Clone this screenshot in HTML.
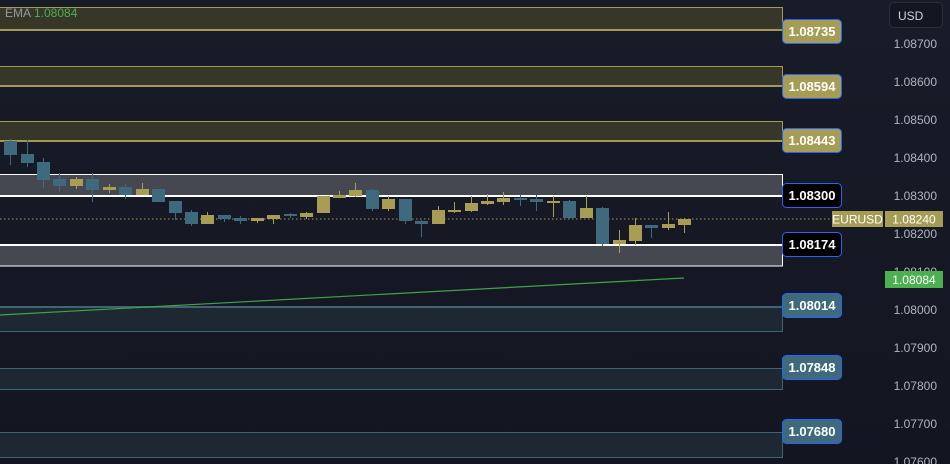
<!DOCTYPE html>
<html><head><meta charset="utf-8"><style>
html,body{margin:0;padding:0;width:950px;height:464px;overflow:hidden;background:#161a25;font-family:"Liberation Sans",sans-serif}
</style></head><body>
<svg width="950" height="464" xmlns="http://www.w3.org/2000/svg" style="display:block">
<defs><linearGradient id="bg" x1="0" y1="0" x2="0" y2="1"><stop offset="0" stop-color="#181c28"/><stop offset="1" stop-color="#131621"/></linearGradient></defs>
<rect width="950" height="464" fill="url(#bg)"/>
<!-- yellow zones -->
<g fill="#363629" stroke="#a39b55" stroke-width="1">
<rect x="-2" y="7.5" width="784.5" height="23"/>
<rect x="-2" y="66.5" width="784.5" height="20"/>
<rect x="-2" y="121.5" width="784.5" height="20"/>
</g>
<g stroke="#a39b55" stroke-width="2"><line x1="0" y1="30" x2="782" y2="30"/><line x1="0" y1="86" x2="782" y2="86"/><line x1="0" y1="141" x2="782" y2="141"/></g>
<!-- gray zones -->
<rect x="-2" y="174.5" width="784.5" height="21" fill="#454751" stroke="#fff" stroke-width="1"/>
<line x1="0" y1="196" x2="782" y2="196" stroke="#fff" stroke-width="2"/>
<rect x="-2" y="244.5" width="784.5" height="21.5" fill="#454751" stroke="#fff" stroke-width="1"/>
<line x1="0" y1="245" x2="782" y2="245" stroke="#fff" stroke-width="2"/>
<!-- blue zones -->
<g fill="#1e2833" stroke="#3e6474" stroke-width="1">
<rect x="-2" y="306.5" width="784.5" height="25"/>
<rect x="-2" y="368.5" width="784.5" height="21"/>
<rect x="-2" y="432.5" width="784.5" height="25"/>
</g>
<line x1="0" y1="307" x2="782" y2="307" stroke="#3e6474" stroke-width="2"/>
<!-- dotted price line -->
<line x1="0" y1="219" x2="832" y2="219" stroke="#a09a55" stroke-width="1" stroke-dasharray="1.5,2.5"/>
<!-- EMA -->
<line x1="0" y1="315" x2="684" y2="278" stroke="#43a047" stroke-width="1.2"/>
<!-- candles -->
<g id="c"></g>
<!-- labels -->
<g font-size="13" font-weight="bold" text-anchor="middle">
<rect x="782.5" y="19.5" width="59" height="24" rx="4" fill="#a59c55" stroke="#2962ff"/><text x="812" y="36" fill="#fff">1.08735</text>
<rect x="782.5" y="74.5" width="59" height="24" rx="4" fill="#a59c55" stroke="#2962ff"/><text x="812" y="91" fill="#fff">1.08594</text>
<rect x="782.5" y="128.5" width="59" height="24" rx="4" fill="#a59c55" stroke="#2962ff"/><text x="812" y="145" fill="#fff">1.08443</text>
<rect x="782.5" y="183.5" width="59" height="24" rx="4" fill="#000" stroke="#2962ff"/><text x="812" y="200" fill="#fff">1.08300</text>
<rect x="782.5" y="232.5" width="59" height="24" rx="4" fill="#000" stroke="#2962ff"/><text x="812" y="249" fill="#fff">1.08174</text>
<rect x="782.5" y="293.5" width="59" height="24" rx="4" fill="#3f6a7b" stroke="#2962ff"/><text x="812" y="310" fill="#fff">1.08014</text>
<rect x="782.5" y="355.5" width="59" height="24" rx="4" fill="#3f6a7b" stroke="#2962ff"/><text x="812" y="372" fill="#fff">1.07848</text>
<rect x="782.5" y="419.5" width="59" height="24" rx="4" fill="#3f6a7b" stroke="#2962ff"/><text x="812" y="436" fill="#fff">1.07680</text>
</g>
<!-- axis -->
<g font-size="12" fill="#b2b5be" text-anchor="end">
<text x="937" y="48">1.08700</text><text x="937" y="86">1.08600</text><text x="937" y="124">1.08500</text><text x="937" y="162">1.08400</text><text x="937" y="200">1.08300</text><text x="937" y="238">1.08200</text><text x="937" y="276">1.08100</text><text x="937" y="314">1.08000</text><text x="937" y="352">1.07900</text><text x="937" y="390">1.07800</text><text x="937" y="428">1.07700</text><text x="937" y="466">1.07600</text>
</g>
<rect x="889.5" y="2.5" width="53" height="25" rx="4" fill="#131722" stroke="#2a2e39"/>
<text x="898" y="20" font-size="12" fill="#d1d4dc">USD</text>
<rect x="832" y="211" width="51" height="16" fill="#a59c55"/><text x="857.5" y="223.5" font-size="12" fill="#fff" text-anchor="middle">EURUSD</text>
<rect x="885" y="211" width="58" height="16" fill="#a59c55"/><text x="914" y="223.5" font-size="12" fill="#fff" text-anchor="middle">1.08240</text>
<rect x="885" y="271" width="58" height="17" fill="#4caf50"/><text x="914" y="284" font-size="12" fill="#fff" text-anchor="middle">1.08084</text>
<text x="5" y="17" font-size="12" fill="#9598a1">EMA</text><text x="34" y="17" font-size="12" fill="#4caf50">1.08084</text>
</svg>
<script>
var B="#3f6a7d",Y="#a89d55";
var d=[[4,141,155,B,139,165],[21,154,163,B,140,167],[37,162,180,B,158,188],[53,179,186,B,173,192],[70,179,186,Y,177,189],[86,179,190,B,173,202],[103,187,190,Y,184,193],[119,187,195,B,184,199],[136,189,195,Y,183,195],[152,189,202,B,189,202],[169,201,213,B,201,220],[185,212,224,B,210,226],[201,215,224,Y,212,224],[218,215,219,B,215,222],[234,218,221,B,216,224],[251,218,221,Y,218,223],[267,215,219,Y,215,224],[284,214,216,B,213,218],[300,213,217,Y,212,219],[317,196,213,Y,196,213],[333,195,198,Y,191,198],[349,190,196,Y,183,197],[366,190,209,B,189,211],[382,199,209,Y,196,211],[399,199,221,B,199,224],[415,221,224,B,220,237],[432,210,224,Y,206,224],[448,210,211,Y,202,213],[465,203,211,Y,196,212],[481,201,204,Y,194,205],[497,198,202,Y,192,205],[514,198,199,B,194,206],[530,199,202,B,195,211],[547,201,202,Y,196,217],[563,201,218,B,200,219],[580,208,218,Y,196,218],[596,208,244,B,207,246],[613,240,244,Y,230,253],[629,225,241,Y,218,245],[645,225,228,B,225,238],[662,224,228,Y,212,230],[678,219,225,Y,218,233]];
var s="";d.forEach(function(c){var cx=c[0]+6.5;s+='<line x1="'+cx+'" y1="'+c[4]+'" x2="'+cx+'" y2="'+c[5]+'" stroke="'+c[3]+'" stroke-width="1"/><rect x="'+c[0]+'" y="'+c[1]+'" width="13" height="'+Math.max(2,c[2]-c[1])+'" fill="'+c[3]+'"/>';});
document.getElementById("c").innerHTML=s;
</script>
</body></html>
